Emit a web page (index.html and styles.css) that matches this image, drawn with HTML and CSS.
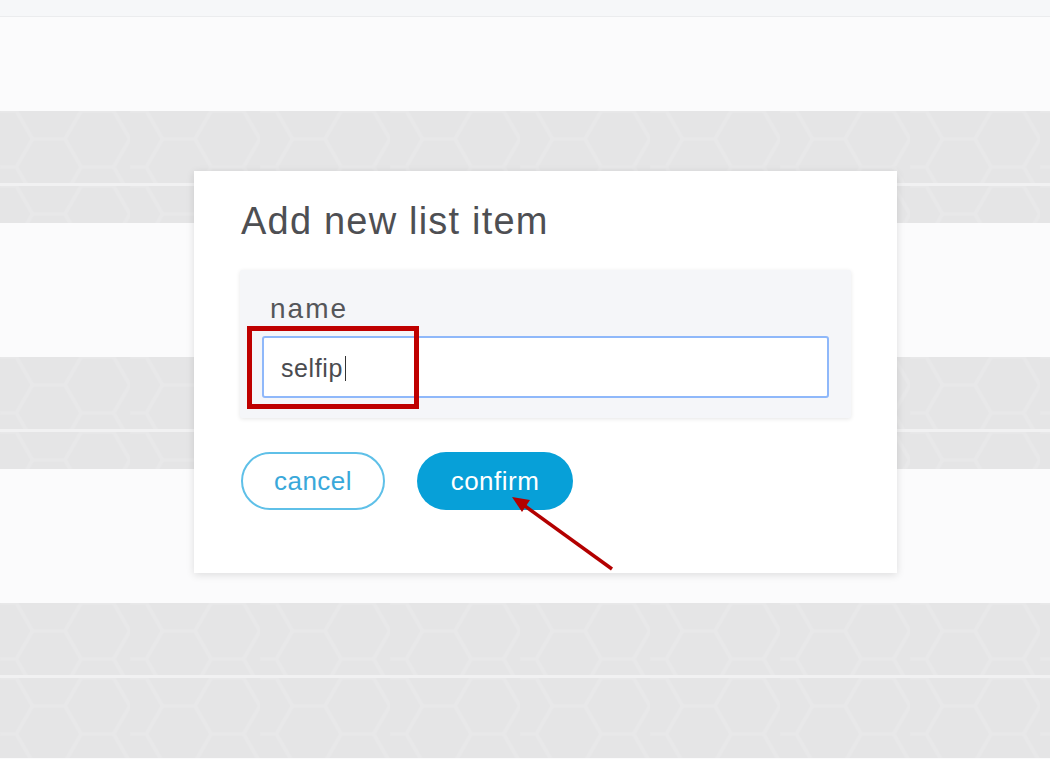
FILE: index.html
```html
<!DOCTYPE html>
<html lang="en">
<head>
<meta charset="utf-8">
<title>Add new list item</title>
<link rel="stylesheet" href="styles.css">
</head>
<body>
<div class="page">
  <div class="topbar"></div>
  <div class="lead"></div>
  <div class="group">
    <div class="band band-main"></div>
    <div class="band-line"></div>
    <div class="band band-sub"></div>
    <div class="body"></div>
  </div>
  <div class="group">
    <div class="band band-main"></div>
    <div class="band-line"></div>
    <div class="band band-sub"></div>
    <div class="body"></div>
  </div>
  <div class="group">
    <div class="band band-main"></div>
    <div class="band-line"></div>
    <div class="band band-sub tail"></div>
  </div>

  <div class="dialog">
    <h2 class="dialog-title">Add new list item</h2>
    <div class="field-panel">
      <label class="field-label" for="name">name</label>
      <div class="input"><span class="input-text">selfip</span><span class="caret"></span></div>
    </div>
    <div class="actions">
      <button class="btn btn-cancel">cancel</button>
      <button class="btn btn-confirm">confirm</button>
    </div>
  </div>

  <div class="highlight-box"></div>
  <svg class="arrow" width="120" height="90" viewBox="0 0 120 90">
    <line x1="112" y1="88" x2="18" y2="20" stroke="#b30000" stroke-width="3.5"/>
    <polygon points="12,16 30,19 22,31" fill="#b30000"/>
  </svg>
</div>
</body>
</html>
```
FILE: styles.css
```css
* { box-sizing: border-box; }
html, body { margin: 0; padding: 0; }
body {
  width: 1050px;
  height: 759px;
  overflow: hidden;
  font-family: "Liberation Sans", Arial, sans-serif;
  background: #fbfbfc;
}
.page {
  position: relative;
  width: 1050px;
  height: 759px;
  display: flex;
  flex-direction: column;
}
.topbar {
  height: 17px;
  background: #f6f7f9;
  border-bottom: 1px solid #ebecee;
  flex: none;
}
.lead { height: 94px; background: #fbfbfc; flex: none; }
.group { display: flex; flex-direction: column; flex: none; }
.band {
  background-color: #e5e5e6;
  background-image: url("data:image/svg+xml,%3Csvg xmlns='http://www.w3.org/2000/svg' width='88' height='76' viewBox='0 0 88 76'%3E%3Cpath d='M0 0 L11 0 L22 19 L11 38 L0 38 M11 38 L22 57 L11 76 M22 19 L44 19 L55 0 M22 57 L44 57 L55 76 M44 19 L55 38 L44 57 M55 38 L77 38 L88 19 M77 38 L88 57 M55 0 L77 0 L88 19 M55 76 L77 76 L88 57' fill='none' stroke='%23e8e8e9' stroke-width='2.5'/%3E%3C/svg%3E");
  background-size: 130px 112px;
}
.band-main { height: 72px; }
.band-line { height: 3px; background: #f1f1f2; }
.band-sub { height: 37px; }
.band-sub.tail { height: 80px; }
.body { height: 134px; background: #fbfbfc; }

.dialog {
  position: absolute;
  left: 194px;
  top: 171px;
  width: 703px;
  height: 402px;
  background: #ffffff;
  box-shadow: 0 2px 8px rgba(0,0,0,0.12);
  padding: 26px 46px 0 46px;
  display: flex;
  flex-direction: column;
}
.dialog-title {
  margin: 0;
  font-weight: normal;
  font-size: 38px;
  letter-spacing: 1.2px;
  line-height: 48px;
  color: #4e4f53;
  padding-left: 1px;
}
.field-panel {
  margin-top: 25px;
  width: 611px;
  height: 148px;
  background: #f5f6f9;
  box-shadow: 0 1px 4px rgba(0,0,0,0.10);
  border-radius: 2px;
  padding: 24px 22px 0 22px;
  display: flex;
  flex-direction: column;
}
.field-label {
  font-size: 28px;
  letter-spacing: 2px;
  line-height: 30px;
  color: #55565a;
  padding-left: 8px;
}
.input {
  margin-top: 12px;
  height: 62px;
  background: #ffffff;
  border: 2px solid #8fb8fa;
  border-radius: 3px;
  display: flex;
  align-items: center;
  padding-left: 17px;
  padding-top: 2px;
}
.input-text {
  font-size: 25px;
  color: #4a4b4f;
  letter-spacing: 0.6px;
}
.caret {
  display: inline-block;
  width: 1px;
  height: 25px;
  background: #333;
  margin-left: 2px;
}
.actions {
  margin-top: 34px;
  display: flex;
  gap: 32px;
  padding-left: 1px;
}
.btn {
  height: 58px;
  border-radius: 29px;
  font-family: "Liberation Sans", Arial, sans-serif;
  font-size: 26px;
  letter-spacing: 0.5px;
  cursor: pointer;
  padding: 0;
}
.btn-cancel {
  width: 144px;
  background: #ffffff;
  border: 2px solid #5fc0e8;
  color: #3aa8da;
}
.btn-confirm {
  width: 156px;
  background: #07a0d8;
  border: none;
  color: #ffffff;
}
.highlight-box {
  position: absolute;
  left: 247px;
  top: 326px;
  width: 172px;
  height: 83px;
  border: 5px solid #bf0000;
}
.arrow {
  position: absolute;
  left: 500px;
  top: 481px;
}
```
